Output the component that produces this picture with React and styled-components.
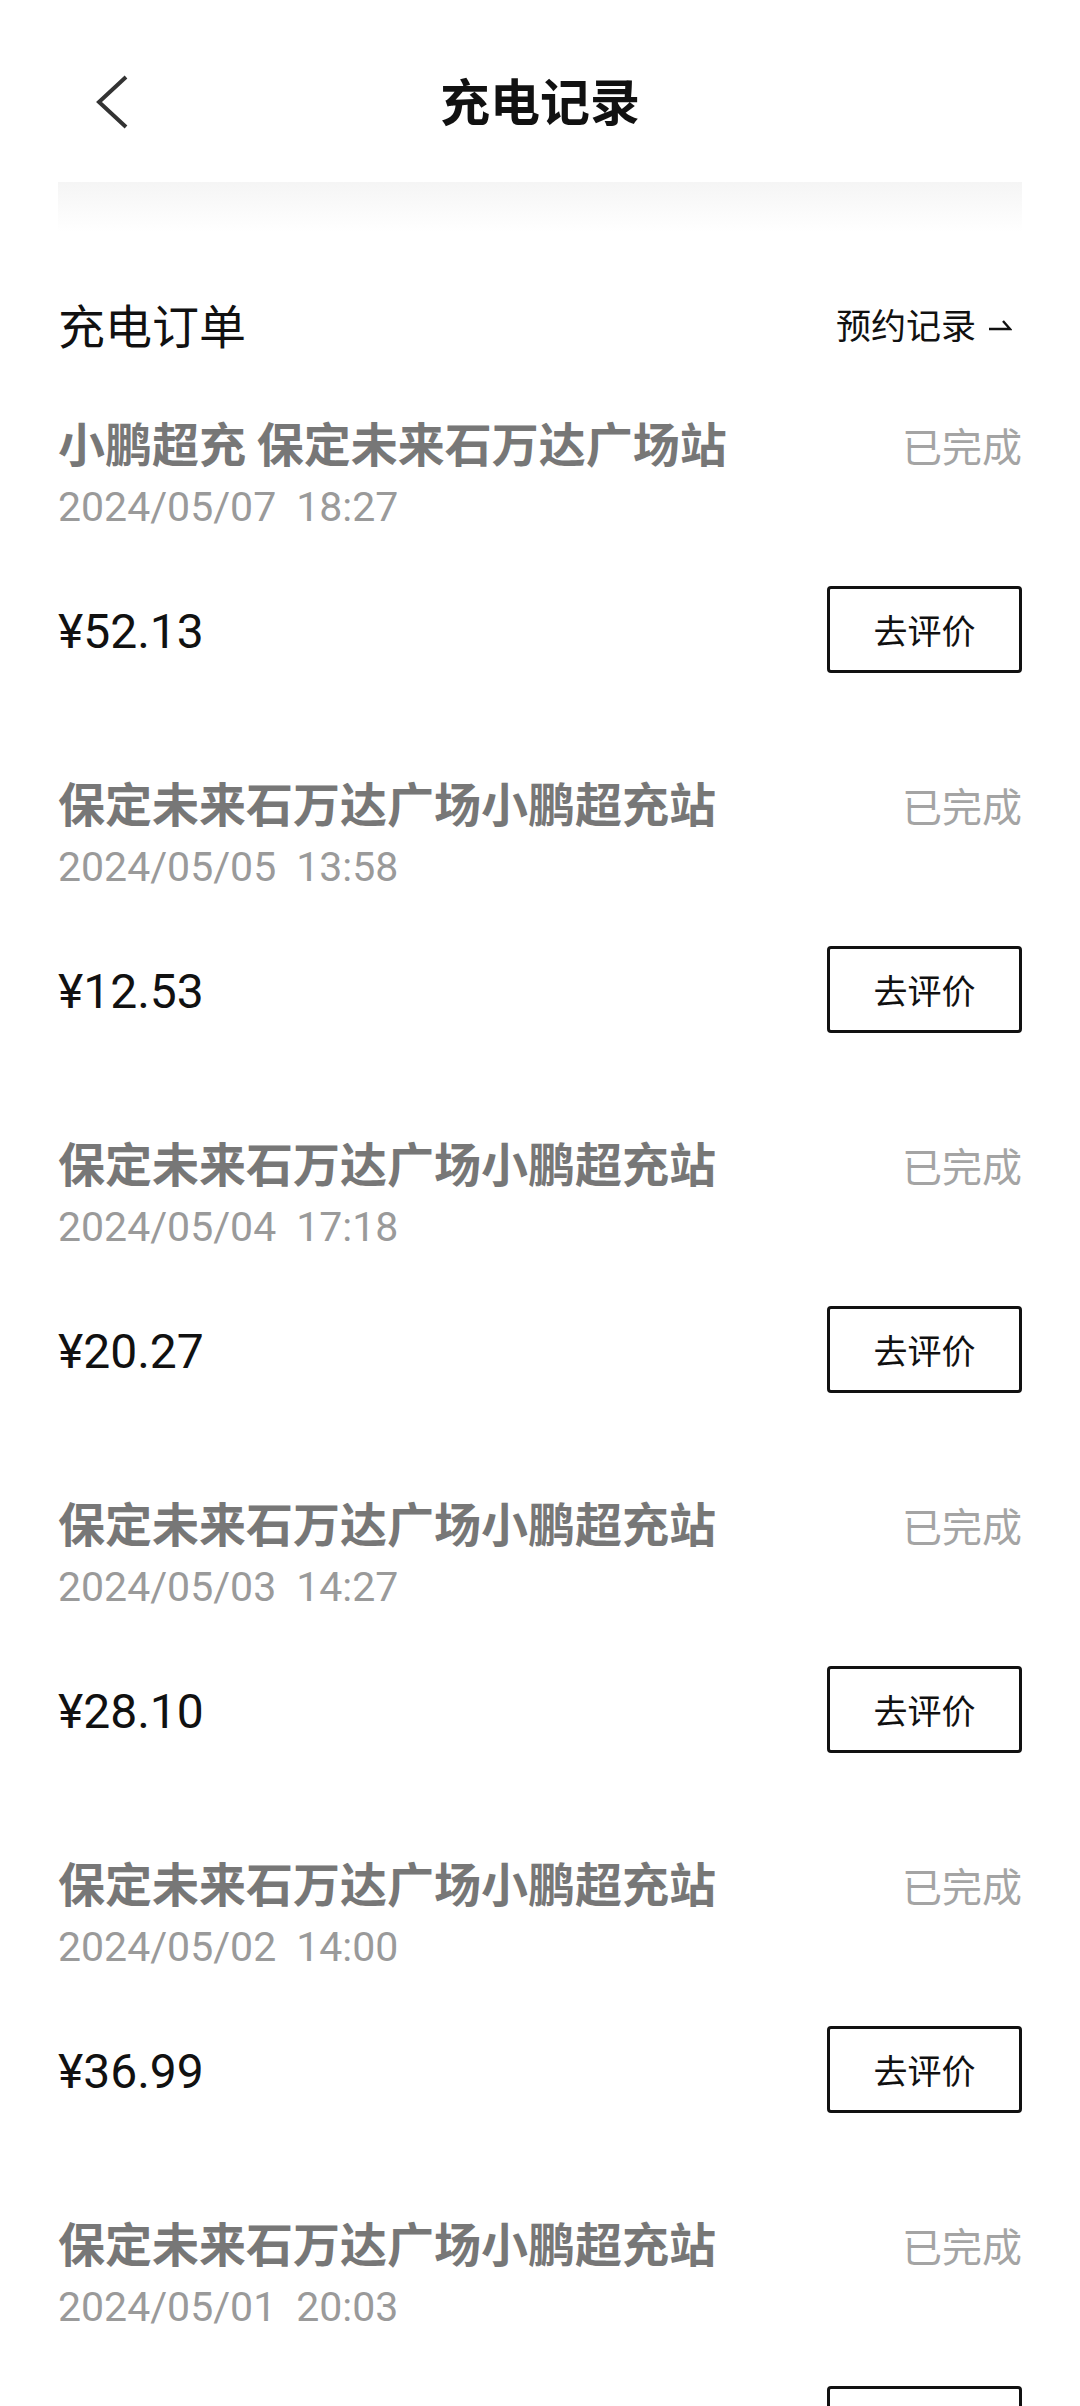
import React from 'react';
import styled, { createGlobalStyle } from 'styled-components';

const GlobalStyle = createGlobalStyle`
  html, body {
    margin: 0;
    padding: 0;
    background: #fff;
    overflow: hidden;
  }
  body {
    font-family: "Noto Sans CJK SC", "Noto Sans", sans-serif;
    color: #111;
  }
`;

const orders = [
  { id: 1, station: '小鹏超充 保定未来石万达广场站', date: '2024/05/07', time: '18:27', price: '¥52.13' },
  { id: 2, station: '保定未来石万达广场小鹏超充站', date: '2024/05/05', time: '13:58', price: '¥12.53' },
  { id: 3, station: '保定未来石万达广场小鹏超充站', date: '2024/05/04', time: '17:18', price: '¥20.27' },
  { id: 4, station: '保定未来石万达广场小鹏超充站', date: '2024/05/03', time: '14:27', price: '¥28.10' },
  { id: 5, station: '保定未来石万达广场小鹏超充站', date: '2024/05/02', time: '14:00', price: '¥36.99' },
  { id: 6, station: '保定未来石万达广场小鹏超充站', date: '2024/05/01', time: '20:03', price: '¥18.46' },
];

const BackIcon = () => (
  <svg width="36" height="56" viewBox="0 0 36 56" fill="none">
    <path d="M32 3 L5 28 L32 53" stroke="#333" strokeWidth="4" />
  </svg>
);

const HarpoonIcon = () => (
  <svg width="24" height="12" viewBox="0 0 24 12" fill="none">
    <path d="M1 10 H22 L15 2" stroke="#111" strokeWidth="2.4" />
  </svg>
);

const OrderItem = ({ station, date, time, price }) => (
  <Item>
    <TopRow>
      <Station>{station}</Station>
      <Status>已完成</Status>
    </TopRow>
    <DateTime>
      <span>{date}</span>
      <span>{time}</span>
    </DateTime>
    <BottomRow>
      <Price>{price}</Price>
      <ReviewButton>去评价</ReviewButton>
    </BottomRow>
  </Item>
);

const App = () => (
  <Page>
    <GlobalStyle />
    <NavBar>
      <BackButton>
        <BackIcon />
      </BackButton>
      <Title>充电记录</Title>
      <span />
    </NavBar>
    <Fade />
    <SectionHeader>
      <SectionTitle>充电订单</SectionTitle>
      <ReserveLink>
        预约记录
        <HarpoonIcon />
      </ReserveLink>
    </SectionHeader>
    <List>
      {orders.map((o) => (
        <OrderItem key={o.id} {...o} />
      ))}
    </List>
  </Page>
);

export default App;

const Page = styled.div`
  width: 1080px;
  height: 100vh;
  overflow: hidden;
  box-sizing: border-box;
  padding: 0 58px;
  background: #fff;
`;

const NavBar = styled.div`
  display: grid;
  grid-template-columns: 1fr auto 1fr;
  align-items: center;
  height: 162px;
  margin-top: 20px;
`;

const BackButton = styled.div`
  display: flex;
  align-items: center;
  margin-left: 36px;
  margin-top: 2px;
`;

const Title = styled.div`
  font-size: 50px;
  font-weight: 700;
  color: #111;
  line-height: 60px;
  margin-top: -5px;
`;

const Fade = styled.div`
  height: 50px;
  background: linear-gradient(#f5f5f5, #fafafa 50%, #ffffff);
`;

const SectionHeader = styled.div`
  display: flex;
  align-items: center;
  justify-content: space-between;
  height: 80px;
  margin-top: 52px;
`;

const SectionTitle = styled.div`
  font-size: 47px;
  line-height: 60px;
  color: #111;
`;

const ReserveLink = styled.div`
  display: flex;
  align-items: center;
  gap: 12px;
  margin-right: 10px;
  font-size: 35px;
  line-height: 50px;
  color: #111;
  svg {
    margin-top: 2px;
  }
`;

const List = styled.div`
  padding-top: 48px;
`;

const Item = styled.div`
  padding-bottom: 99px;
`;

const TopRow = styled.div`
  display: flex;
  align-items: center;
  justify-content: space-between;
  height: 60px;
`;

const Station = styled.div`
  font-size: 47px;
  font-weight: 700;
  color: #777;
  line-height: 60px;
  white-space: nowrap;
`;

const Status = styled.div`
  font-size: 40px;
  color: #a4a4a4;
  line-height: 60px;
  margin-top: 6px;
`;

const DateTime = styled.div`
  display: flex;
  gap: 20px;
  margin-top: 10px;
  font-family: Roboto, "Noto Sans", sans-serif;
  font-size: 41px;
  line-height: 50px;
  color: #9a9a9a;
`;

const BottomRow = styled.div`
  display: flex;
  align-items: center;
  justify-content: space-between;
  margin-top: 54px;
  height: 87px;
`;

const Price = styled.div`
  font-family: Roboto, "Noto Sans", sans-serif;
  font-size: 48px;
  color: #111;
  line-height: 60px;
  margin-top: 4px;
`;

const ReviewButton = styled.div`
  box-sizing: border-box;
  width: 195px;
  height: 87px;
  display: flex;
  align-items: center;
  justify-content: center;
  border: 3px solid #111;
  border-radius: 4px;
  font-size: 34px;
  color: #111;
`;
